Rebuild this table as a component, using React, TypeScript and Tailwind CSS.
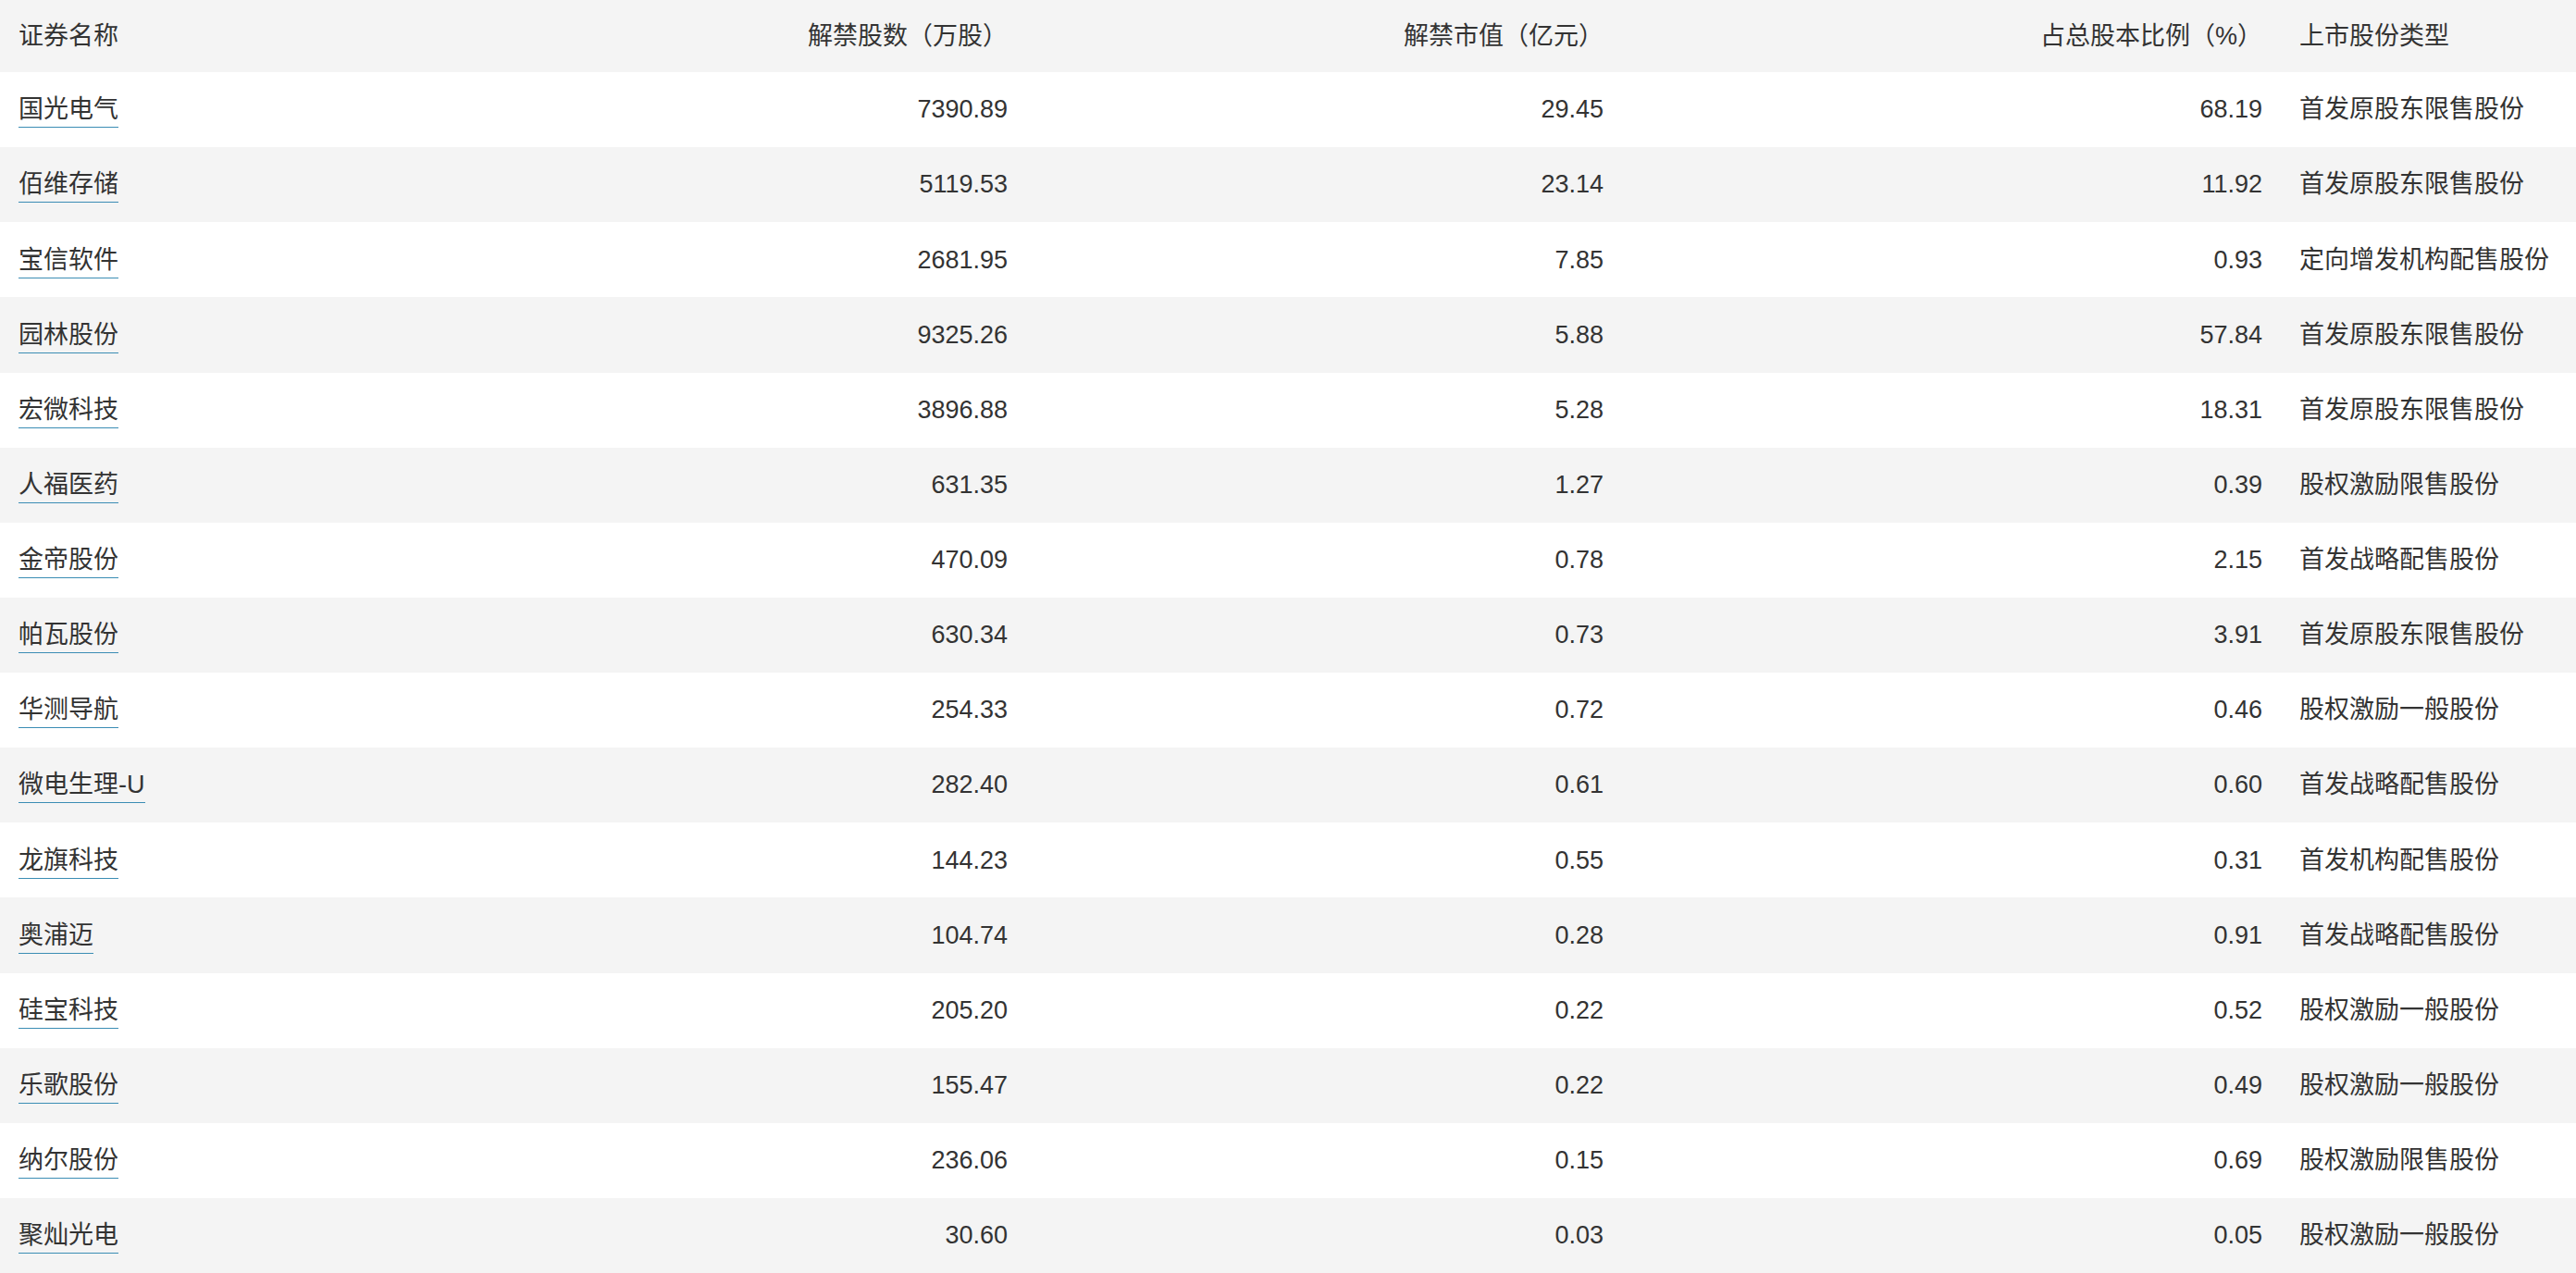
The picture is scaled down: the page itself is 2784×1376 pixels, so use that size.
const rows: [string, string, string, string, string][] = [
  ["国光电气", "7390.89", "29.45", "68.19", "首发原股东限售股份"],
  ["佰维存储", "5119.53", "23.14", "11.92", "首发原股东限售股份"],
  ["宝信软件", "2681.95", "7.85", "0.93", "定向增发机构配售股份"],
  ["园林股份", "9325.26", "5.88", "57.84", "首发原股东限售股份"],
  ["宏微科技", "3896.88", "5.28", "18.31", "首发原股东限售股份"],
  ["人福医药", "631.35", "1.27", "0.39", "股权激励限售股份"],
  ["金帝股份", "470.09", "0.78", "2.15", "首发战略配售股份"],
  ["帕瓦股份", "630.34", "0.73", "3.91", "首发原股东限售股份"],
  ["华测导航", "254.33", "0.72", "0.46", "股权激励一般股份"],
  ["微电生理-U", "282.40", "0.61", "0.60", "首发战略配售股份"],
  ["龙旗科技", "144.23", "0.55", "0.31", "首发机构配售股份"],
  ["奥浦迈", "104.74", "0.28", "0.91", "首发战略配售股份"],
  ["硅宝科技", "205.20", "0.22", "0.52", "股权激励一般股份"],
  ["乐歌股份", "155.47", "0.22", "0.49", "股权激励一般股份"],
  ["纳尔股份", "236.06", "0.15", "0.69", "股权激励限售股份"],
  ["聚灿光电", "30.60", "0.03", "0.05", "股权激励一般股份"],
];

const grid = "grid grid-cols-[465px_644px_644px_712px_1fr] items-center";

export default function App() {
  return (
    <div className="w-[2784px] h-[1376px] overflow-hidden bg-white text-[#333333] text-[27px] font-['Liberation_Sans','Noto_Sans_CJK_SC',sans-serif]">
      <div className={`${grid} h-[78px] bg-[#f4f4f4]`}>
        <div className="px-5">证券名称</div>
        <div className="px-5 text-right">解禁股数（万股）</div>
        <div className="px-5 text-right">解禁市值（亿元）</div>
        <div className="px-5 text-right">占总股本比例（%）</div>
        <div className="px-5">上市股份类型</div>
      </div>
      {rows.map((r, i) => (
        <div
          key={r[0]}
          className={`${grid} h-[81.125px] ${i % 2 === 0 ? "bg-white" : "bg-[#f4f4f4]"}`}
        >
          <div className="px-5">
            <span className="inline-block leading-[37px] border-b border-[#3b8db4]">{r[0]}</span>
          </div>
          <div className="px-5 text-right">{r[1]}</div>
          <div className="px-5 text-right">{r[2]}</div>
          <div className="px-5 text-right">{r[3]}</div>
          <div className="px-5 whitespace-nowrap">{r[4]}</div>
        </div>
      ))}
    </div>
  );
}
